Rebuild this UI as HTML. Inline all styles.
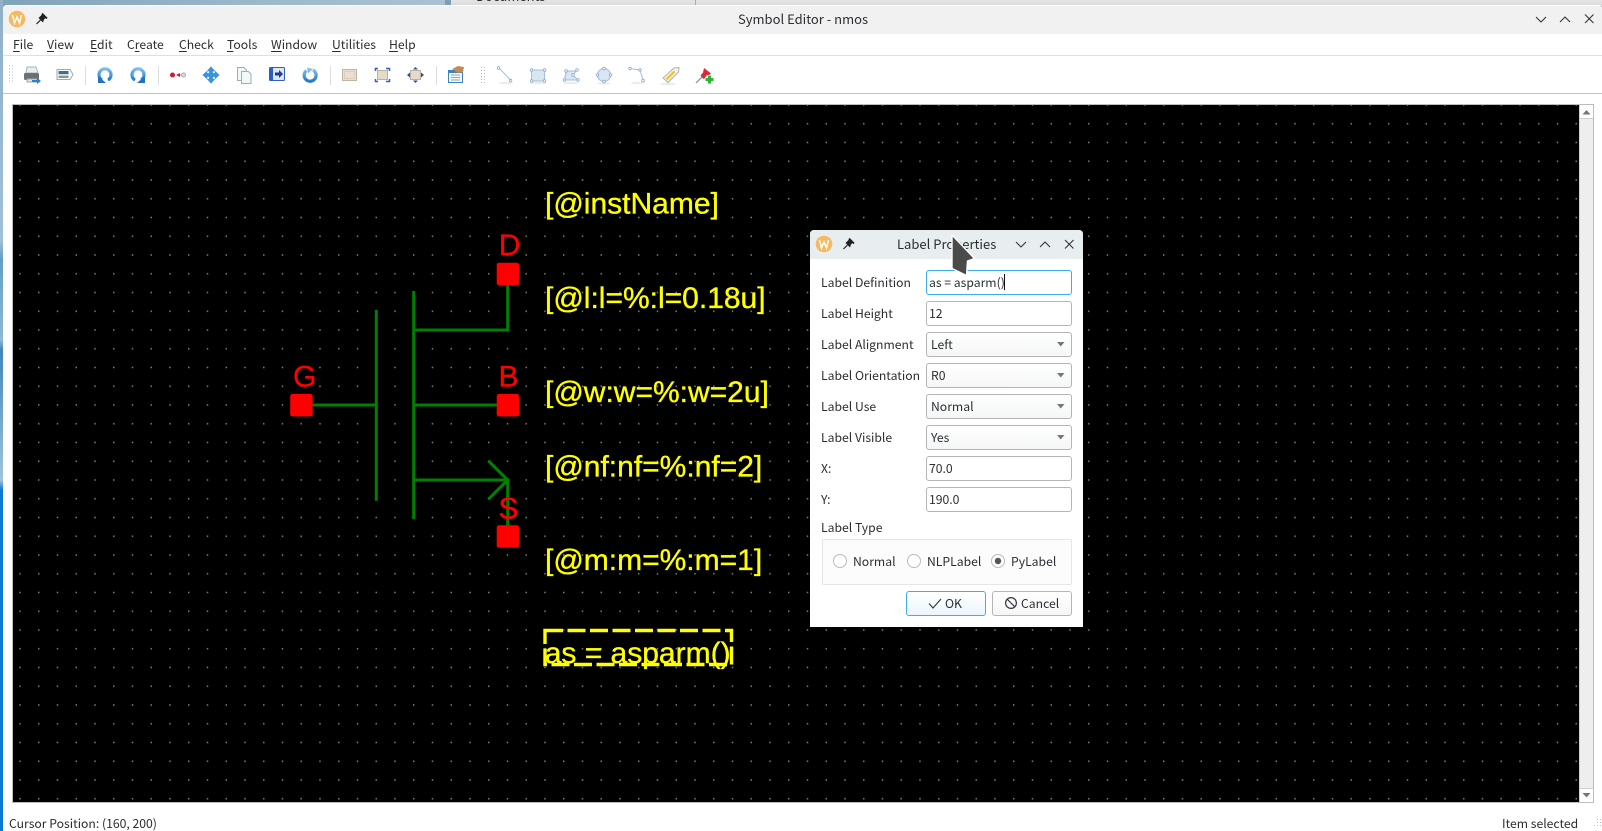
<!DOCTYPE html>
<html><head><meta charset="utf-8"><title>Symbol Editor - nmos</title>
<style>
html,body{margin:0;padding:0;width:1602px;height:831px;overflow:hidden;background:#8fb0c8}
body{position:relative;font-family:"Noto Sans CJK JP","Liberation Sans",sans-serif;font-size:12.2px;color:#2a2e32}
.a{position:absolute;box-sizing:border-box}
.t{position:absolute;white-space:pre;line-height:18px;height:18px}
.h{font-size:13px}
.f{position:absolute;box-sizing:border-box;left:926px;width:146px;height:25px;border:1px solid #b3b5b6;border-radius:3px;background:#fff}
.c{background:linear-gradient(#fff,#f5f6f6)}
u{text-decoration-thickness:1px;text-underline-offset:2px}
svg{position:absolute;left:0;top:0}
</style></head><body>
<div class="a" style="left:0;top:0;width:445px;height:6px;background:linear-gradient(90deg,#7fa3ba,#9db9cc 60%,#a9c2d2)"></div>
<div class="a" style="left:445px;top:0;width:1157px;height:6px;background:linear-gradient(#e4e4e4,#dadada)"></div>
<div class="a" style="left:445px;top:0;width:6px;height:6px;background:#7f9db3"></div>
<div class="a" style="left:695px;top:0;width:1px;height:6px;background:#aaa"></div>
<div class="t h" style="left:476px;top:-13px">Documents</div>
<div class="a" style="left:0;top:0;width:3px;height:831px;background:linear-gradient(#8fb0c8 0,#9fc0d6 240px,#5f9fc8 260px,#8fb8d4 340px,#3f86bd 350px,#9fc4dc 480px,#0a78d6 490px,#0a78d6 831px)"></div>

<!-- window -->
<div class="a" style="left:3px;top:5px;width:1599px;height:826px;background:#fff;border-radius:4px 4px 0 0"></div>
<div class="a" style="left:3px;top:5px;width:1599px;height:29px;background:#f1f1f1;border-radius:4px 4px 0 0;border-top:1px solid #fff"></div>
<div class="a" style="left:3px;top:55px;width:1599px;height:1px;background:#dfdfdf"></div>
<div class="a" style="left:3px;top:93px;width:1599px;height:1px;background:#c4c4c4"></div>

<div class="t h" style="left:738px;top:10px;width:129px;text-align:center">Symbol Editor - nmos</div>

<div class="t" style="left:13px;top:35px"><u>F</u>ile</div>
<div class="t" style="left:47px;top:35px"><u>V</u>iew</div>
<div class="t" style="left:90px;top:35px"><u>E</u>dit</div>
<div class="t" style="left:127px;top:35px">C<u>r</u>eate</div>
<div class="t" style="left:179px;top:35px"><u>C</u>heck</div>
<div class="t" style="left:227px;top:35px"><u>T</u>ools</div>
<div class="t" style="left:271px;top:35px"><u>W</u>indow</div>
<div class="t" style="left:332px;top:35px"><u>U</u>tilities</div>
<div class="t" style="left:389px;top:35px"><u>H</u>elp</div>

<!-- canvas -->
<svg width="1602" height="831" viewBox="0 0 1602 831" style="font-family:'Liberation Sans',sans-serif">
<defs>
<pattern id="g" patternUnits="userSpaceOnUse" x="0" y="0" width="18.75" height="18.75"><rect x="0.5" y="10.5" width="1.5" height="1.5" fill="#808080"/></pattern>
<linearGradient id="bl" x1="0" y1="0" x2="0" y2="1"><stop offset="0" stop-color="#7fbdec"/><stop offset="1" stop-color="#1f7ccc"/></linearGradient>
</defs>
<rect x="12.5" y="104.5" width="1581" height="698" fill="#fff" stroke="#bdbdbd"/>
<rect x="13" y="105" width="1566" height="697" fill="#000"/>
<rect x="13" y="105" width="1566" height="697" fill="url(#g)"/>
<rect x="1580" y="118" width="13" height="671" fill="#eeeeee"/>
<path d="M1580 118.5H1593M1580 788.5H1593M1579.5 105V802" stroke="#cfcfcf" fill="none"/>
<path d="M1582.5 114.5L1586.5 110L1590.5 114.5Z M1582.5 793L1590.5 793L1586.5 797.5Z" fill="#777"/>

<!-- mosfet -->
<g stroke="#008000" stroke-width="3" fill="none">
<path d="M376.3 310V500.7M413.7 291V519M312 405H376.3M413.7 405H497M413.7 330H507.7V285M413.7 480H507.7V526M488.3 460.7L507.7 480L488.3 499.3"/>
</g>
<g fill="#f00">
<rect x="496.7" y="262.7" width="22.4" height="22.4" rx="2.2"/>
<rect x="290.2" y="394" width="22.4" height="22.4" rx="2.2"/>
<rect x="496.7" y="394" width="22.4" height="22.4" rx="2.2"/>
<rect x="496.7" y="525.3" width="22.4" height="22.4" rx="2.2"/>
<g font-size="30" stroke="#f00" stroke-width=".3">
<text x="498.7" y="255">D</text>
<text x="293" y="386.7">G</text>
<text x="498.5" y="386.7">B</text>
<text x="498.5" y="518.3">S</text>
</g>
</g>
<g fill="#ff0" font-size="30" stroke="#ff0" stroke-width=".35">
<text x="545" y="213.3">[@instName]</text>
<text x="545" y="307.8">[@l:l=%:l=0.18u]</text>
<text x="545" y="402">[@w:w=%:w=2u]</text>
<text x="545" y="476.7">[@nf:nf=%:nf=2]</text>
<text x="545" y="570">[@m:m=%:m=1]</text>
<text x="544.7" y="663">as = asparm()</text>
</g>
<path d="M545 630.5H731.5V664.5H545Z" fill="none" stroke="#ff0" stroke-width="3.4" stroke-dasharray="18 4.5"/>

<!-- toolbar -->
<g fill="#b5b5b5">
<path d="M9 65.5h1v1h-1zM9 68.5h1v1h-1zM9 71.5h1v1h-1zM9 74.5h1v1h-1zM9 77.5h1v1h-1zM9 80.5h1v1h-1zM12 65.5h1v1h-1zM12 68.5h1v1h-1zM12 71.5h1v1h-1zM12 74.5h1v1h-1zM12 77.5h1v1h-1zM12 80.5h1v1h-1z"/>
<path d="M481 67h1v1h-1zM481 70h1v1h-1zM481 73h1v1h-1zM481 76h1v1h-1zM481 79h1v1h-1zM481 82h1v1h-1zM484 67h1v1h-1zM484 70h1v1h-1zM484 73h1v1h-1zM484 76h1v1h-1zM484 79h1v1h-1zM484 82h1v1h-1z"/>
<rect x="85" y="66" width="1" height="19" fill="#dcdcdc"/><rect x="158" y="66" width="1" height="19" fill="#dcdcdc"/><rect x="330" y="66" width="1" height="19" fill="#dcdcdc"/><rect x="436" y="66" width="1" height="19" fill="#dcdcdc"/>
</g>
<!-- printer -->
<g transform="translate(32,75)"><path d="M-5 -8H4L6 -2H-6Z" fill="#e8eef2" stroke="#aab4ba"/><rect x="-8" y="-2" width="15" height="7" rx="1.5" fill="#6d6f72"/><rect x="-5" y="4" width="10" height="3" fill="#dfe5ea" stroke="#9aa"/><path d="M0 5H5V3L9 6L5 9V7H0Z" fill="#2a7fd0"/></g>
<!-- image save -->
<g transform="translate(65,74.5)"><path d="M-8 -5H5L8 0L5 5H-8Z" fill="#fff" stroke="#9aaab6"/><rect x="-6.5" y="-3.5" width="10" height="3" fill="#3f6f96"/><rect x="-6.5" y="-.5" width="10" height="2" fill="#c8dce6"/><rect x="-6.5" y="1.5" width="10" height="2" fill="#7f9a80"/></g>
<!-- undo / redo -->
<g fill="none" stroke="url(#bl)" stroke-width="3.2"><path d="M102 80A6 6 0 1 1 108 80"/><path d="M141 80A6 6 0 1 0 135 80"/></g>
<path d="M98 76L106 83H98Z" fill="#2272c0"/><path d="M145 76L137 83H145Z" fill="#2272c0"/>
<!-- pins -->
<circle cx="172.5" cy="75" r="2.5" fill="#c8202c"/><path d="M176 75l4-2v4z" fill="#c8202c"/><path d="M180 75H184" stroke="#999"/><circle cx="183.5" cy="75" r="2" fill="#ddd" stroke="#aaa"/>
<!-- move -->
<g transform="translate(211,75)" fill="#3a93e0"><path d="M0 -8L3.5 -4.2H1.5V-1.5H4.2V-3.5L8 0L4.2 3.5V1.5H1.5V4.2H3.5L0 8L-3.5 4.2H-1.5V1.5H-4.2V3.5L-8 0L-4.2 -3.5V-1.5H-1.5V-4.2H-3.5Z" stroke="#3a93e0" stroke-width=".8"/></g>
<!-- copy -->
<g fill="#f2f7f8" stroke="#9ab0b2"><path d="M237.5 67.5H244L246.5 70V80.5H237.5Z"/><path d="M241.5 71.5H248.5L251 74V83.5H241.5Z"/></g>
<!-- arrow box -->
<rect x="269.5" y="67.5" width="15" height="13" rx="1" fill="#dfe6f6" stroke="#2c5fc0"/><rect x="270" y="68" width="3" height="12" fill="#2c5fc0"/><path d="M275 72.5H279V70L283 74L279 78V75.5H275Z" fill="#1c3f90"/>
<!-- rotate -->
<path d="M306.5 70.5A6 6 0 1 0 313 70" fill="none" stroke="url(#bl)" stroke-width="3.2"/><path d="M307 67.5L313 69L308 73.5Z" fill="#86bde8"/>
<!-- zoom rects -->
<rect x="342.5" y="69.5" width="14" height="11" fill="#e9e0d2" stroke="#c2b4a2"/><rect x="344.5" y="71.5" width="10" height="7" fill="none" stroke="#c0b09c" stroke-width=".7" stroke-dasharray="1 1"/>
<rect x="377.5" y="70.5" width="10" height="9" fill="#e4dbcc" stroke="#bfb09c"/><path d="M375.5 71V68.5H378M386 68.5H389.5V71M389.5 79V81.5H386M378 81.5H375.5V79" fill="none" stroke="#2c5fc0" stroke-width="1.5"/>
<rect x="410.5" y="70.5" width="10" height="9" fill="#e4dbcc" stroke="#bfb09c"/><path d="M410 72.5L407 75L410 77.5ZM421 72.5L424 75L421 77.5ZM413 69.5L415.5 67L418 69.5ZM413 80.5L415.5 83L418 80.5Z" fill="#1f4fb8"/>
<!-- properties -->
<rect x="448.5" y="70.5" width="14" height="12" fill="#f2f6f8" stroke="#3a83c0"/><rect x="449" y="71" width="13" height="2" fill="#3a83c0"/><path d="M451 75h9M451 77.5h9M451 80h9" stroke="#9aa"/><path d="M452 69L458 66L464 67L463 72L458 73Z" fill="#c48a55"/>
<!-- shadows -->
<g fill="#ececec"><ellipse cx="506" cy="83" rx="7" ry="1.2"/><ellipse cx="538" cy="83" rx="8" ry="1.2"/><ellipse cx="571" cy="83" rx="8" ry="1.2"/><ellipse cx="604" cy="83.5" rx="7" ry="1.2"/><ellipse cx="638" cy="83" rx="7" ry="1.2"/><ellipse cx="668" cy="84" rx="8" ry="1.2"/></g>
<!-- draw tools -->
<g fill="none" stroke="#a4c0dc">
<path d="M499.5 68.5L510.5 80"/>
<rect x="531.5" y="70" width="13" height="11" fill="#d8e5f2"/>
<path d="M566 71H576L573 75L578 80H564.5Z" fill="#d8e5f2"/>
<circle cx="604" cy="75" r="6.5" fill="#d8e5f2"/>
<path d="M630 68.5L640 70L643 80.5"/>
</g>
<g fill="#fff" stroke="#8fabca" stroke-width=".8">
<circle cx="498.5" cy="68" r="1.3"/><circle cx="510.5" cy="80.5" r="1.3"/>
<circle cx="531.5" cy="70" r="1.3"/><circle cx="544.5" cy="70" r="1.3"/><circle cx="531.5" cy="81" r="1.3"/><circle cx="544.5" cy="81" r="1.3"/>
<circle cx="566" cy="71" r="1.3"/><circle cx="577" cy="70" r="1.3"/><circle cx="573" cy="75" r="1.3"/><circle cx="578" cy="80" r="1.3"/><circle cx="564.5" cy="80" r="1.3"/>
<circle cx="604" cy="68.5" r="1.3"/><circle cx="597.5" cy="75" r="1.3"/><circle cx="610.5" cy="75" r="1.3"/><circle cx="604" cy="81.5" r="1.3"/>
<circle cx="630" cy="68.5" r="1.3"/><circle cx="640" cy="70" r="1.3"/><circle cx="643" cy="80.5" r="1.3"/>
</g>
<!-- tag -->
<path d="M663 78L674 68L679 67.5L678.5 72L668 82.5Z" fill="#f4f4ec" stroke="#a8b4ae"/><path d="M665.5 78.5L674 70.5L675.5 72L667.5 80Z" fill="#efc22e"/>
<!-- pin add -->
<path d="M696 83L702 77" stroke="#888" stroke-width="1.2"/><path d="M704 68L711 73.5L709 75H707L704 79L702.5 78L700.5 75.5L703 72.5Z" fill="#dd2a3a"/><path d="M705.5 78h2.5v-2.5h3V78h2.5v3h-2.5v2.5h-3V81h-2.5Z" fill="#2cb437"/>
<!-- W logo + pin + window buttons -->
<circle cx="17" cy="19" r="8.3" fill="#f6b95f"/>
<path d="M12.5 15L14.5 23L17 17L19.5 23L21.5 15" fill="none" stroke="#fff" stroke-width="1.5"/>
<path d="M36.5 24L40.5 20" stroke="#222" stroke-width="1.2"/><path d="M38.5 18L43 22.5L44 19.5L46 17.5L42.5 14L40.5 16Z" fill="#222"/><path d="M42 13.5L47 18.5" stroke="#222" stroke-width="1.8"/>
<g fill="none" stroke="#31363b" stroke-width="1.1">
<path d="M1536 17L1541 22L1546 17M1560 22L1565 17L1570 22M1585 14.5L1593.5 23M1593.5 14.5L1585 23"/>
</g>
<!-- size grip -->
<path d="M1597 822h1v1h-1zM1594 825h1v1h-1zM1597 825h1v1h-1zM1600 825h1v1h-1zM1597 819h1v1h-1zM1600 822h1v1h-1zM1600 819h1v1h-1z" fill="#bbb"/>
</svg>

<div class="t" style="left:9px;top:814px">Cursor Position: (160, 200)</div>
<div class="t" style="left:1502px;top:814px">Item selected</div>

<!-- dialog -->
<div class="a" style="left:810px;top:230px;width:273px;height:397px;background:#fff;border-radius:4px 4px 0 0"></div>
<div class="a" style="left:810px;top:230px;width:273px;height:29px;background:#e8edef;border-radius:4px 4px 0 0"></div>
<div class="t h" style="left:897px;top:235px;width:99px;text-align:center">Label Properties</div>
<div class="t" style="left:821px;top:273px">Label Definition</div>
<div class="t" style="left:821px;top:304px">Label Height</div>
<div class="t" style="left:821px;top:335px">Label Alignment</div>
<div class="t" style="left:821px;top:366px">Label Orientation</div>
<div class="t" style="left:821px;top:397px">Label Use</div>
<div class="t" style="left:821px;top:428px">Label Visible</div>
<div class="t" style="left:821px;top:459px">X:</div>
<div class="t" style="left:821px;top:490px">Y:</div>
<div class="t" style="left:821px;top:518px">Label Type</div>

<div class="f" style="top:270px;border-color:#3daee9"></div>
<div class="f" style="top:301px"></div>
<div class="f c" style="top:332px"></div>
<div class="f c" style="top:363px"></div>
<div class="f c" style="top:394px"></div>
<div class="f c" style="top:425px"></div>
<div class="f" style="top:456px"></div>
<div class="f" style="top:487px"></div>
<div class="t" style="left:929px;top:273px">as = asparm()</div>
<div class="a" style="left:1004px;top:274px;width:1px;height:16px;background:#111"></div>
<div class="t" style="left:929px;top:304px">12</div>
<div class="t" style="left:931px;top:335px">Left</div>
<div class="t" style="left:931px;top:366px">R0</div>
<div class="t" style="left:931px;top:397px">Normal</div>
<div class="t" style="left:931px;top:428px">Yes</div>
<div class="t" style="left:929px;top:459px">70.0</div>
<div class="t" style="left:929px;top:490px">190.0</div>

<div class="a" style="left:822px;top:539px;width:250px;height:46px;background:#fcfcfc;border:1px solid #e6e6e6;border-radius:2px"></div>
<div class="t" style="left:853px;top:552px">Normal</div>
<div class="t" style="left:927px;top:552px">NLPLabel</div>
<div class="t" style="left:1011px;top:552px">PyLabel</div>

<div class="a" style="left:906px;top:591px;width:80px;height:25px;background:linear-gradient(#fff,#edf6fc);border:1px solid #3daee9;border-radius:3px"></div>
<div class="a" style="left:992px;top:591px;width:80px;height:25px;background:linear-gradient(#fff,#f6f6f6);border:1px solid #b3b5b6;border-radius:3px"></div>
<div class="t" style="left:945px;top:594px">OK</div>
<div class="t" style="left:1021px;top:594px">Cancel</div>

<svg width="1602" height="831" viewBox="0 0 1602 831">
<circle cx="824" cy="244" r="8.3" fill="#f6b95f"/>
<path d="M819.5 240L821.5 248L824 242L826.5 248L828.5 240" fill="none" stroke="#fff" stroke-width="1.5"/>
<path d="M843.5 249L847.5 245" stroke="#222" stroke-width="1.2"/><path d="M845.5 243L850 247.5L851 244.5L853 242.5L849.5 239L847.5 241Z" fill="#222"/><path d="M849 238.5L854 243.5" stroke="#222" stroke-width="1.8"/>
<g fill="none" stroke="#31363b" stroke-width="1.1">
<path d="M1016 242L1021 247L1026 242M1040 247L1045 242L1050 247M1065 240L1073.5 248.5M1073.5 240L1065 248.5"/>
</g>
<path d="M1057 342H1064.5L1060.75 346.5ZM1057 373H1064.5L1060.75 377.5ZM1057 404H1064.5L1060.75 408.5ZM1057 435H1064.5L1060.75 439.5Z" fill="#777"/>
<g fill="#fff" stroke="#b9bbbc"><circle cx="840" cy="561" r="6.5"/><circle cx="914" cy="561" r="6.5"/><circle cx="998" cy="561" r="6.5"/></g>
<circle cx="998" cy="561" r="3.2" fill="#555"/>
<path d="M929 603.5L933 608L941 599" fill="none" stroke="#31363b" stroke-width="1.1"/>
<circle cx="1011" cy="603" r="5.4" fill="none" stroke="#31363b" stroke-width="1.2"/><path d="M1007 599L1015 607" stroke="#31363b" stroke-width="1.2"/>
<path d="M952 235L974.5 258.5L967.5 261L966.5 275.5L952 268.5Z" fill="#4a4a4a" stroke="#fff" stroke-width="1.4" stroke-linejoin="round"/>
</svg>
</body></html>
